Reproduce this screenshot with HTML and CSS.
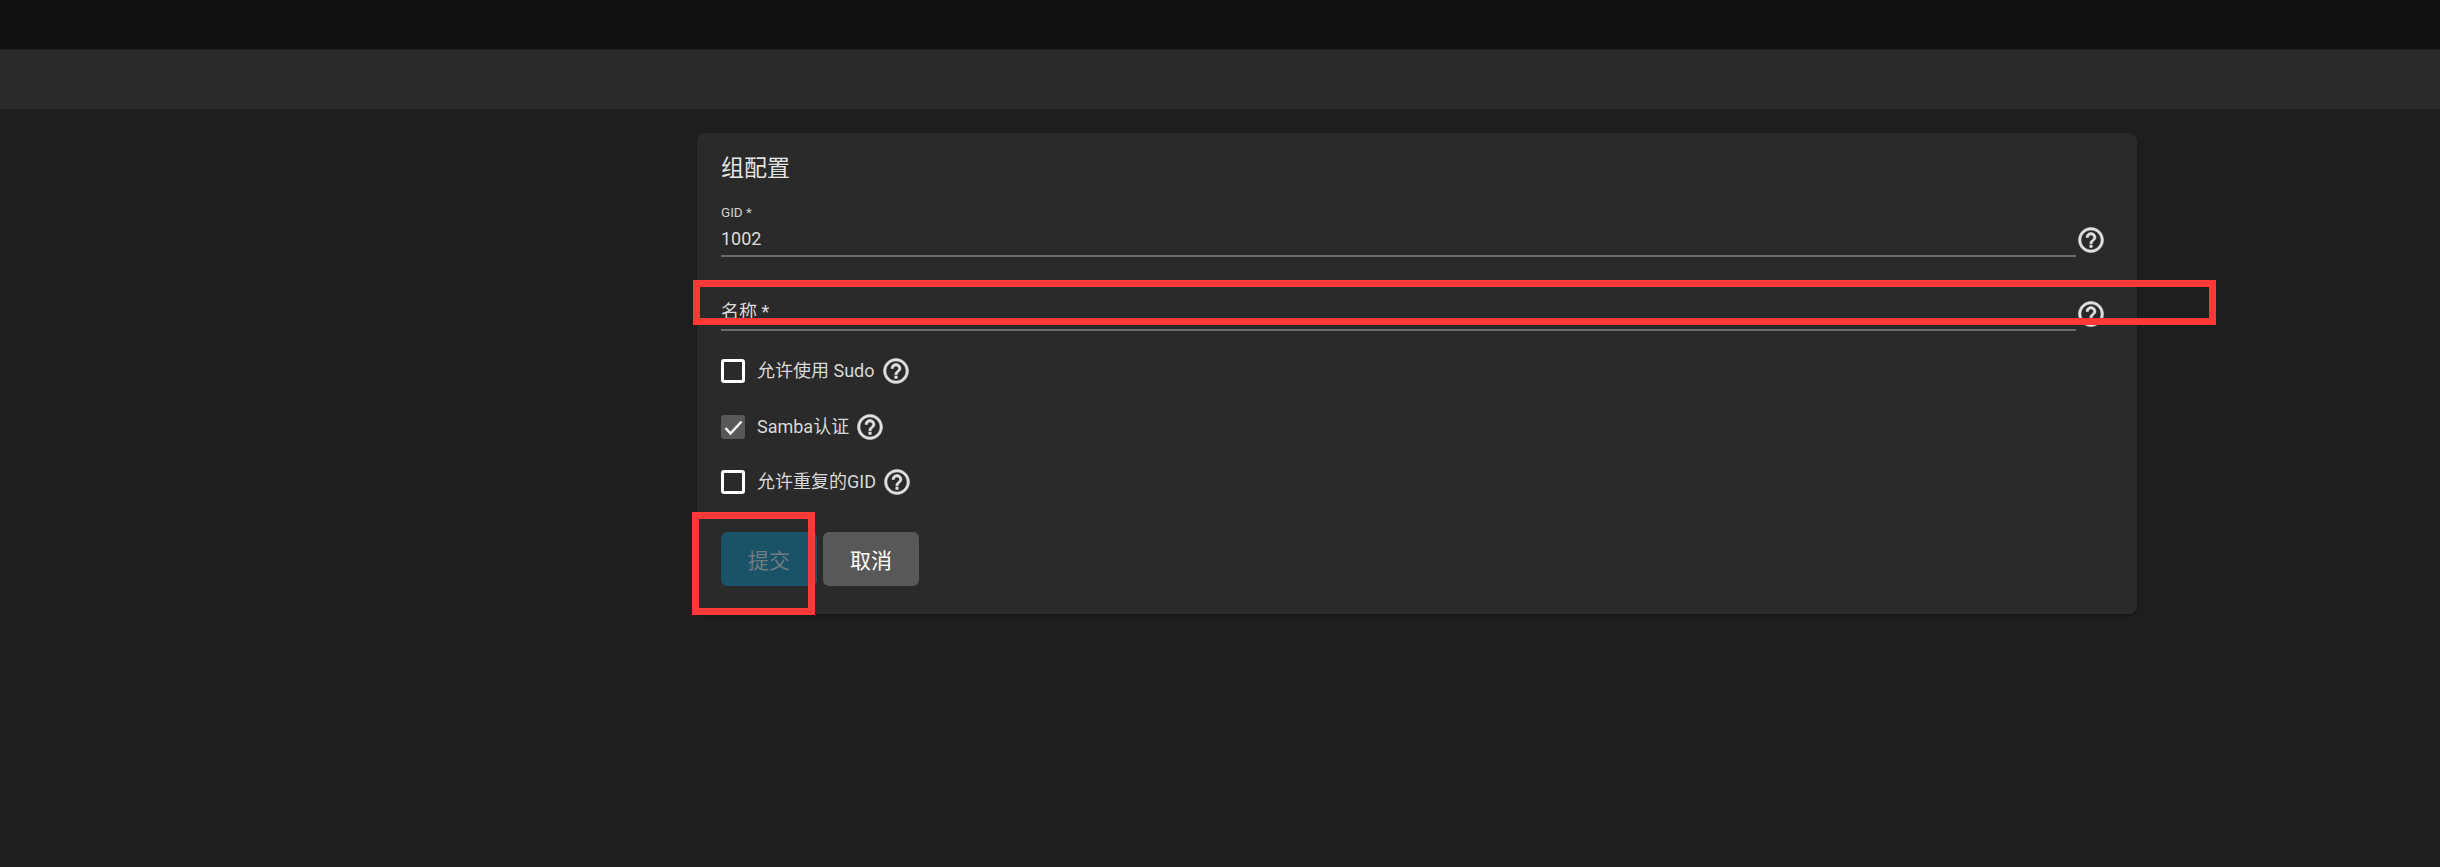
FILE: index.html
```html
<!DOCTYPE html>
<html lang="zh-CN">
<head>
<meta charset="utf-8">
<title>组配置</title>
<link rel="stylesheet" href="styles.css">
</head>
<body>
<svg class="sprite" width="0" height="0" aria-hidden="true">
  <symbol id="help" viewBox="0 0 24 24"><path d="M11 18h2v-2h-2v2zm1-16C6.48 2 2 6.48 2 12s4.48 10 10 10 10-4.48 10-10S17.52 2 12 2zm0 18c-4.41 0-8-3.59-8-8s3.59-8 8-8 8 3.59 8 8-3.59 8-8 8zm0-14c-2.21 0-4 1.79-4 4h2c0-1.1.9-2 2-2s2 .9 2 2c0 2-3 1.75-3 5h2c0-2.25 3-2.5 3-5 0-2.21-1.79-4-4-4z"/></symbol>
</svg>
<header class="topbar"></header>
<div class="subbar"></div>
<main class="main">
  <section class="card">
    <h2 class="title">组配置</h2>
    <div class="field-row">
      <div class="field">
        <span class="label-small">GID *</span>
        <span class="value">1002</span>
      </div>
      <svg class="help help-field"><use href="#help"/></svg>
    </div>
    <div class="field-row field-row-next">
      <div class="field field-empty">
        <span class="label-large">名称 *</span>
      </div>
      <svg class="help help-field"><use href="#help"/></svg>
    </div>
    <div class="checks">
      <div class="check-row">
        <span class="box"></span>
        <span class="check-label">允许使用 Sudo</span>
        <svg class="help"><use href="#help"/></svg>
      </div>
      <div class="check-row">
        <span class="box box-on">
          <svg class="tick" viewBox="0 0 24 24"><path d="M4.5 13l5 5.5L20.5 6.5"/></svg>
        </span>
        <span class="check-label">Samba认证</span>
        <svg class="help"><use href="#help"/></svg>
      </div>
      <div class="check-row">
        <span class="box"></span>
        <span class="check-label">允许重复的GID</span>
        <svg class="help"><use href="#help"/></svg>
      </div>
    </div>
    <div class="actions">
      <button class="btn btn-submit" type="button">提交</button>
      <button class="btn btn-cancel" type="button">取消</button>
    </div>
  </section>
</main>
<div class="mark mark-name"></div>
<div class="mark mark-submit"></div>
</body>
</html>
```

FILE: styles.css
```css
* { box-sizing: border-box; }

html, body { height: 100%; }

body {
  margin: 0;
  position: relative;
  overflow: hidden;
  background: #1e1e1e;
  color: #dcdcdc;
  font-family: Roboto, "Noto Sans CJK SC", sans-serif;
  display: flex;
  flex-direction: column;
}

.sprite { position: absolute; }

.topbar {
  height: 50px;
  flex: none;
  background: #111111;
  border-bottom: 1px solid #232323;
}

.subbar {
  height: 59px;
  flex: none;
  background: #2a2a2a;
}

.main {
  flex: 1;
  padding: 24px 0 0 697px;
}

.card {
  width: 1440px;
  height: 481px;
  padding: 21px 24px 0;
  background: #2a2a2a;
  border-radius: 8px;
  box-shadow: 0 2px 3px rgba(0, 0, 0, 0.25);
}

.title {
  margin: 0 0 20px;
  height: 29px;
  font-size: 23px;
  line-height: 29px;
  font-weight: 400;
  color: #e4e4e4;
}

.field-row {
  display: flex;
  align-items: flex-end;
}

.field-row-next { margin-top: 20px; }

.field {
  width: 1355px;
  height: 54px;
  display: flex;
  flex-direction: column;
  border-bottom: 2px solid #6b6b6b;
}

.label-small {
  height: 18px;
  font-size: 13.5px;
  line-height: 18px;
  color: #cfcfcf;
}

.value {
  height: 34px;
  font-size: 18px;
  line-height: 36px;
  color: #dcdcdc;
}

.field-empty { justify-content: flex-end; }

.label-large {
  height: 34px;
  font-size: 18px;
  line-height: 34px;
  color: #dcdcdc;
}

.help {
  width: 30px;
  height: 30px;
  flex: none;
  fill: #e0e0e0;
  stroke: #e0e0e0;
  stroke-width: 0.4;
  margin-left: 6px;
}

.help-field {
  margin-left: 0;
  margin-bottom: 2px;
}

.checks {
  margin-top: 28px;
  display: flex;
  flex-direction: column;
  gap: 31.5px;
}

.check-row {
  height: 24px;
  display: flex;
  align-items: center;
}

.box {
  width: 24px;
  height: 24px;
  flex: none;
  border: 3px solid #ffffff;
  border-radius: 3px;
  margin-right: 12px;
}

.box-on {
  border: none;
  background: #585858;
}

.tick {
  display: block;
  width: 24px;
  height: 24px;
  fill: none;
  stroke: #ffffff;
  stroke-width: 2.4;
}

.check-label {
  font-size: 18px;
  line-height: 24px;
  color: #d8d8d8;
}

.actions {
  margin-top: 38px;
  display: flex;
  gap: 6px;
}

.btn {
  width: 96px;
  height: 54px;
  border: none;
  border-radius: 6px;
  padding: 0;
  font-family: inherit;
  font-size: 21px;
}

.btn-submit {
  background: #1a5268;
  color: #6f7d83;
}

.btn-cancel {
  background: #585858;
  color: #ffffff;
}

.mark {
  position: absolute;
  border: 7px solid #ff3838;
}

.mark-name {
  left: 693px;
  top: 280px;
  width: 1523px;
  height: 45px;
}

.mark-submit {
  left: 692px;
  top: 512px;
  width: 123px;
  height: 103px;
}
```
